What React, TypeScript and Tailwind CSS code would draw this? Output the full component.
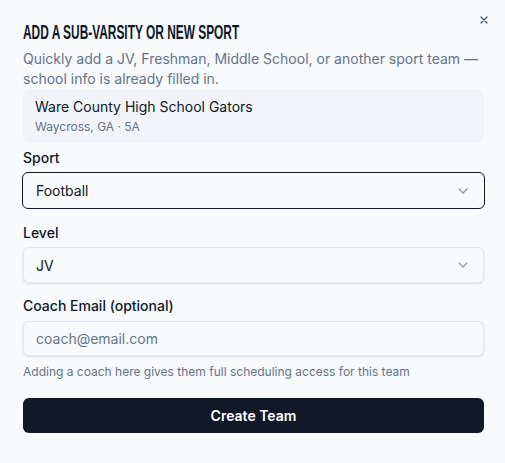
import React from "react";

function Chevron() {
  return (
    <svg width="16" height="16" viewBox="0 0 24 24" fill="none" stroke="#64748b" strokeWidth="2" strokeLinecap="round" strokeLinejoin="round" className="opacity-70">
      <path d="m6 9 6 6 6-6" />
    </svg>
  );
}

export default function App() {
  return (
    <div className="w-[505px] h-[463px] bg-[#f8fafc] relative" style={{ fontFamily: "Inter, 'Noto Sans', sans-serif" }}>
      <button className="absolute right-[15px] top-[14px] text-[#475569]">
        <svg width="12" height="12" viewBox="0 0 24 24" fill="none" stroke="currentColor" strokeWidth="2.5" strokeLinecap="round">
          <path d="M18 6 6 18M6 6l12 12" />
        </svg>
      </button>
      <div className="pl-[23px] pr-[21px] pt-[20px] flex flex-col">
        <h2 className="h-[24px] text-[20px] leading-[24px] font-bold text-[#0f172a] whitespace-nowrap">
          <span
            className="inline-block origin-left scale-x-[0.595]"
            style={{ fontFamily: "'Liberation Sans', Arial, sans-serif" }}
          >
            ADD A SUB-VARSITY OR NEW SPORT
          </span>
        </h2>
        <p className="mt-[5px] text-[14px] leading-[20px] text-[#64748b]">
          Quickly add a JV, Freshman, Middle School, or another sport team — school info is already filled in.
        </p>
        <div className="rounded-lg bg-[#f1f5f9] px-[12px] pt-[8px] pb-[8px]">
          <div className="text-[14px] leading-[20px] text-[#0f172a]">Ware County High School Gators</div>
          <div className="text-[12px] leading-[16px] text-[#64748b] mt-[2px]">Waycross, GA · 5A</div>
        </div>
        <label className="mt-[5px] text-[14px] leading-[20px] font-medium text-[#0f172a]">Sport</label>
        <div className="mt-[4px] h-[37px] rounded-md border border-[#0f172a] bg-[#f8fafc] flex items-center justify-between pl-[13px] pr-[13px] -mx-[1px]">
          <span className="text-[14px] text-[#0f172a]">Football</span>
          <Chevron />
        </div>
        <label className="mt-[14px] text-[14px] leading-[20px] font-medium text-[#0f172a]">Level</label>
        <div className="mt-[4px] h-[36px] rounded-md border border-[#e2e8f0] bg-[#f8fafc] shadow-sm flex items-center justify-between px-[12px]">
          <span className="text-[14px] text-[#0f172a]">JV</span>
          <Chevron />
        </div>
        <label className="mt-[13px] text-[14px] leading-[20px] font-medium text-[#0f172a]">Coach Email (optional)</label>
        <div className="mt-[5px] h-[35px] rounded-md border border-[#e2e8f0] bg-[#f8fafc] shadow-sm flex items-center px-[12px]">
          <span className="text-[14px] text-[#64748b]">coach@email.com</span>
        </div>
        <p className="mt-[8px] text-[12px] leading-[16px] text-[#64748b]">Adding a coach here gives them full scheduling access for this team</p>
        <button className="mt-[18px] h-[35px] rounded-md bg-[#111827] text-white text-[14px] font-semibold">Create Team</button>
      </div>
    </div>
  );
}
